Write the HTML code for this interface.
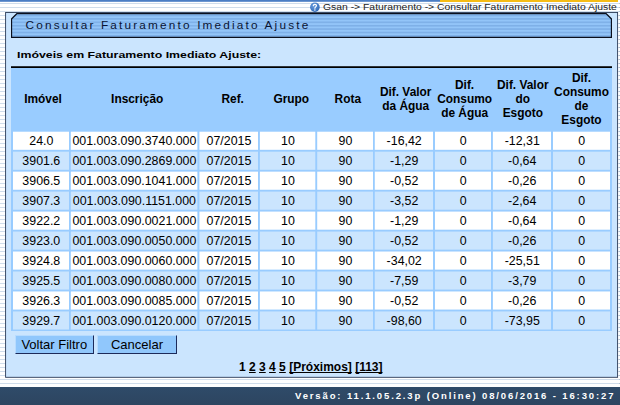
<!DOCTYPE html>
<html><head><meta charset="utf-8">
<style>
html,body{margin:0;padding:0;}
body{width:620px;height:405px;overflow:hidden;position:relative;font-family:"Liberation Sans",sans-serif;
background:repeating-linear-gradient(to bottom,#d0ddeb 0,#d0ddeb 0.4px,#ffffff 0.4px,#ffffff 3.4px,#d0ddeb 3.4px,#d0ddeb 4px);color:#000;}
.topbar{position:absolute;left:0;top:0;width:441px;height:2px;background:linear-gradient(to bottom,#4a7dc4 0,#4a7dc4 1.2px,#a9c2e4 2px);}
.crumbbg{position:absolute;left:322px;top:0;width:298px;height:12px;background:#fff;}
.crumb{position:absolute;left:323.3px;top:1.2px;height:12px;line-height:12px;font-size:9.2px;color:#222;white-space:nowrap;transform:scaleX(1.128);transform-origin:0 0;}
.qi{position:absolute;left:309px;top:1px;width:12px;height:12px;}
.hl{position:absolute;left:440px;top:0;width:178px;height:2px;background:linear-gradient(to bottom,#f5bc16 0,#f5bc16 1.7px,#f9d773 2px);}
.panel{position:absolute;left:0;top:0;width:620px;height:405px;}
.title{position:absolute;left:11px;top:13px;width:601px;height:25px;}
.ttext{position:absolute;left:25.5px;top:17.2px;font-size:11.8px;letter-spacing:2.17px;color:#0a1433;white-space:nowrap;line-height:16px;}
.sub{position:absolute;left:17px;top:49px;font-size:9.6px;font-weight:bold;color:#000;white-space:nowrap;line-height:12px;transform:scaleX(1.285);transform-origin:0 0;}
.bline{position:absolute;left:11px;top:66px;width:601px;height:2px;background:linear-gradient(to bottom,#30363c 0,#30363c 1px,#000 1px);}
.thead{position:absolute;left:11px;top:68px;width:601px;height:62px;background:#99ccff;}
.th{position:absolute;font-weight:bold;font-size:11.9px;line-height:13.9px;text-align:center;color:#000;}
.tbl{position:absolute;left:11px;top:130px;width:601px;height:201px;background:#99ccff;}
.c{position:absolute;height:18px;line-height:18px;font-size:12.4px;text-align:center;white-space:nowrap;}
.btn{position:absolute;top:335px;height:18.5px;box-sizing:border-box;background:#90c7fc;border-top:1px solid #b8dcff;border-left:1px solid #b8dcff;border-right:1.5px solid #1c2a5a;border-bottom:1.5px solid #1c2a5a;font-size:13px;line-height:17px;text-align:center;color:#000;}
.pag{position:absolute;left:239px;top:360.6px;text-decoration-skip-ink:none;font-size:12px;font-weight:bold;line-height:13px;white-space:nowrap;}
.pag u{margin:0;}
.footer{position:absolute;left:0;top:387px;width:620px;height:18px;background:linear-gradient(to bottom,#2f4b69,#2d4560);}
.ftext{position:absolute;right:4.7px;top:390px;color:#fff;font-weight:bold;font-size:9.5px;letter-spacing:1.87px;line-height:12px;white-space:nowrap;}
</style></head><body>
<div class="topbar"></div>
<div style="position:absolute;left:618.6px;top:2px;width:1.4px;height:385px;background:repeating-linear-gradient(to bottom,#b4c2d2 0,#b4c2d2 0.4px,#ffffff 0.4px,#ffffff 3.4px,#b4c2d2 3.4px,#b4c2d2 4px);background-position:0 -2px"></div>
<div class="hl"></div>
<svg class="qi" viewBox="0 0 12 12"><defs><radialGradient id="qg" cx="40%" cy="35%" r="70%"><stop offset="0" stop-color="#6b9fe0"/><stop offset="1" stop-color="#2f67b5"/></radialGradient></defs><circle cx="5.9" cy="6.2" r="4.8" fill="url(#qg)"/><path d="M4.3 4.6 Q4.4 3.3 5.9 3.3 Q7.5 3.3 7.5 4.6 Q7.5 5.5 6.6 5.9 Q5.9 6.3 5.9 7.2" fill="none" stroke="#fff" stroke-width="1.2" stroke-linecap="round"/><circle cx="5.9" cy="8.9" r="0.75" fill="#fff"/></svg>
<div class="crumb">Gsan -&gt; Faturamento -&gt; Consultar Faturamento Imediato Ajuste</div>
<svg class="panel" viewBox="0 0 620 405"><rect x="5.6" y="12.45" width="612" height="364.85" fill="#cbe5fe" stroke="#2b3a56" stroke-width="0.9"/></svg>
<svg class="title" viewBox="0 0 601 25" width="601" height="25">
<defs><pattern id="st" width="4" height="3.4" patternUnits="userSpaceOnUse"><rect width="4" height="3.4" fill="#93c5f8"/><rect y="1.9" width="4" height="1.2" fill="#76a8e2"/></pattern></defs>
<path d="M0.5 6 L6 0.5 L595 0.5 L600.5 6 L600.5 24.5 L0.5 24.5 Z" fill="url(#st)" stroke="#0a0f1c" stroke-width="1.3" stroke-linejoin="miter"/>
</svg>
<div class="ttext">Consultar Faturamento Imediato Ajuste</div>
<div class="sub">Imóveis em Faturamento Imediato Ajuste:</div>
<div class="bline"></div>
<div class="thead"></div>
<div id="heads">
<div class="th" style="left:3.0px;top:92.8px;width:80px">Imóvel</div>
<div class="th" style="left:97.2px;top:92.8px;width:80px">Inscrição</div>
<div class="th" style="left:192.7px;top:92.8px;width:80px">Ref.</div>
<div class="th" style="left:251.3px;top:92.8px;width:80px">Grupo</div>
<div class="th" style="left:307.8px;top:92.8px;width:80px">Rota</div>
<div class="th" style="left:365.7px;top:85.8px;width:80px">Dif. Valor<br>da Água</div>
<div class="th" style="left:424.6px;top:78.8px;width:80px">Dif.<br>Consumo<br>de Água</div>
<div class="th" style="left:482.8px;top:78.8px;width:80px">Dif. Valor<br>do<br>Esgoto</div>
<div class="th" style="left:541.5px;top:71.9px;width:80px">Dif.<br>Consumo<br>de<br>Esgoto</div>
</div><!--eh-->
<div class="tbl" id="tbl">
<svg style="position:absolute;left:0;top:0" width="601" height="202" viewBox="11 130 601 202">
<rect x="13" y="131.70" width="56.0" height="18.1" fill="#fff"/>
<rect x="70.8" y="131.70" width="126.6" height="18.1" fill="#fff"/>
<rect x="199.4" y="131.70" width="58.6" height="18.1" fill="#fff"/>
<rect x="259.9" y="131.70" width="55.4" height="18.1" fill="#fff"/>
<rect x="317.2" y="131.70" width="55.8" height="18.1" fill="#fff"/>
<rect x="374.8" y="131.70" width="58.2" height="18.1" fill="#fff"/>
<rect x="435" y="131.70" width="56.0" height="18.1" fill="#fff"/>
<rect x="492.9" y="131.70" width="58.1" height="18.1" fill="#fff"/>
<rect x="553" y="131.70" width="57.0" height="18.1" fill="#fff"/>
<rect x="13" y="151.67" width="56.0" height="18.1" fill="#cbe5fe"/>
<rect x="70.8" y="151.67" width="126.6" height="18.1" fill="#cbe5fe"/>
<rect x="199.4" y="151.67" width="58.6" height="18.1" fill="#cbe5fe"/>
<rect x="259.9" y="151.67" width="55.4" height="18.1" fill="#cbe5fe"/>
<rect x="317.2" y="151.67" width="55.8" height="18.1" fill="#cbe5fe"/>
<rect x="374.8" y="151.67" width="58.2" height="18.1" fill="#cbe5fe"/>
<rect x="435" y="151.67" width="56.0" height="18.1" fill="#cbe5fe"/>
<rect x="492.9" y="151.67" width="58.1" height="18.1" fill="#cbe5fe"/>
<rect x="553" y="151.67" width="57.0" height="18.1" fill="#cbe5fe"/>
<rect x="13" y="171.64" width="56.0" height="18.1" fill="#fff"/>
<rect x="70.8" y="171.64" width="126.6" height="18.1" fill="#fff"/>
<rect x="199.4" y="171.64" width="58.6" height="18.1" fill="#fff"/>
<rect x="259.9" y="171.64" width="55.4" height="18.1" fill="#fff"/>
<rect x="317.2" y="171.64" width="55.8" height="18.1" fill="#fff"/>
<rect x="374.8" y="171.64" width="58.2" height="18.1" fill="#fff"/>
<rect x="435" y="171.64" width="56.0" height="18.1" fill="#fff"/>
<rect x="492.9" y="171.64" width="58.1" height="18.1" fill="#fff"/>
<rect x="553" y="171.64" width="57.0" height="18.1" fill="#fff"/>
<rect x="13" y="191.61" width="56.0" height="18.1" fill="#cbe5fe"/>
<rect x="70.8" y="191.61" width="126.6" height="18.1" fill="#cbe5fe"/>
<rect x="199.4" y="191.61" width="58.6" height="18.1" fill="#cbe5fe"/>
<rect x="259.9" y="191.61" width="55.4" height="18.1" fill="#cbe5fe"/>
<rect x="317.2" y="191.61" width="55.8" height="18.1" fill="#cbe5fe"/>
<rect x="374.8" y="191.61" width="58.2" height="18.1" fill="#cbe5fe"/>
<rect x="435" y="191.61" width="56.0" height="18.1" fill="#cbe5fe"/>
<rect x="492.9" y="191.61" width="58.1" height="18.1" fill="#cbe5fe"/>
<rect x="553" y="191.61" width="57.0" height="18.1" fill="#cbe5fe"/>
<rect x="13" y="211.58" width="56.0" height="18.1" fill="#fff"/>
<rect x="70.8" y="211.58" width="126.6" height="18.1" fill="#fff"/>
<rect x="199.4" y="211.58" width="58.6" height="18.1" fill="#fff"/>
<rect x="259.9" y="211.58" width="55.4" height="18.1" fill="#fff"/>
<rect x="317.2" y="211.58" width="55.8" height="18.1" fill="#fff"/>
<rect x="374.8" y="211.58" width="58.2" height="18.1" fill="#fff"/>
<rect x="435" y="211.58" width="56.0" height="18.1" fill="#fff"/>
<rect x="492.9" y="211.58" width="58.1" height="18.1" fill="#fff"/>
<rect x="553" y="211.58" width="57.0" height="18.1" fill="#fff"/>
<rect x="13" y="231.55" width="56.0" height="18.1" fill="#cbe5fe"/>
<rect x="70.8" y="231.55" width="126.6" height="18.1" fill="#cbe5fe"/>
<rect x="199.4" y="231.55" width="58.6" height="18.1" fill="#cbe5fe"/>
<rect x="259.9" y="231.55" width="55.4" height="18.1" fill="#cbe5fe"/>
<rect x="317.2" y="231.55" width="55.8" height="18.1" fill="#cbe5fe"/>
<rect x="374.8" y="231.55" width="58.2" height="18.1" fill="#cbe5fe"/>
<rect x="435" y="231.55" width="56.0" height="18.1" fill="#cbe5fe"/>
<rect x="492.9" y="231.55" width="58.1" height="18.1" fill="#cbe5fe"/>
<rect x="553" y="231.55" width="57.0" height="18.1" fill="#cbe5fe"/>
<rect x="13" y="251.52" width="56.0" height="18.1" fill="#fff"/>
<rect x="70.8" y="251.52" width="126.6" height="18.1" fill="#fff"/>
<rect x="199.4" y="251.52" width="58.6" height="18.1" fill="#fff"/>
<rect x="259.9" y="251.52" width="55.4" height="18.1" fill="#fff"/>
<rect x="317.2" y="251.52" width="55.8" height="18.1" fill="#fff"/>
<rect x="374.8" y="251.52" width="58.2" height="18.1" fill="#fff"/>
<rect x="435" y="251.52" width="56.0" height="18.1" fill="#fff"/>
<rect x="492.9" y="251.52" width="58.1" height="18.1" fill="#fff"/>
<rect x="553" y="251.52" width="57.0" height="18.1" fill="#fff"/>
<rect x="13" y="271.49" width="56.0" height="18.1" fill="#cbe5fe"/>
<rect x="70.8" y="271.49" width="126.6" height="18.1" fill="#cbe5fe"/>
<rect x="199.4" y="271.49" width="58.6" height="18.1" fill="#cbe5fe"/>
<rect x="259.9" y="271.49" width="55.4" height="18.1" fill="#cbe5fe"/>
<rect x="317.2" y="271.49" width="55.8" height="18.1" fill="#cbe5fe"/>
<rect x="374.8" y="271.49" width="58.2" height="18.1" fill="#cbe5fe"/>
<rect x="435" y="271.49" width="56.0" height="18.1" fill="#cbe5fe"/>
<rect x="492.9" y="271.49" width="58.1" height="18.1" fill="#cbe5fe"/>
<rect x="553" y="271.49" width="57.0" height="18.1" fill="#cbe5fe"/>
<rect x="13" y="291.46" width="56.0" height="18.1" fill="#fff"/>
<rect x="70.8" y="291.46" width="126.6" height="18.1" fill="#fff"/>
<rect x="199.4" y="291.46" width="58.6" height="18.1" fill="#fff"/>
<rect x="259.9" y="291.46" width="55.4" height="18.1" fill="#fff"/>
<rect x="317.2" y="291.46" width="55.8" height="18.1" fill="#fff"/>
<rect x="374.8" y="291.46" width="58.2" height="18.1" fill="#fff"/>
<rect x="435" y="291.46" width="56.0" height="18.1" fill="#fff"/>
<rect x="492.9" y="291.46" width="58.1" height="18.1" fill="#fff"/>
<rect x="553" y="291.46" width="57.0" height="18.1" fill="#fff"/>
<rect x="13" y="311.43" width="56.0" height="18.1" fill="#cbe5fe"/>
<rect x="70.8" y="311.43" width="126.6" height="18.1" fill="#cbe5fe"/>
<rect x="199.4" y="311.43" width="58.6" height="18.1" fill="#cbe5fe"/>
<rect x="259.9" y="311.43" width="55.4" height="18.1" fill="#cbe5fe"/>
<rect x="317.2" y="311.43" width="55.8" height="18.1" fill="#cbe5fe"/>
<rect x="374.8" y="311.43" width="58.2" height="18.1" fill="#cbe5fe"/>
<rect x="435" y="311.43" width="56.0" height="18.1" fill="#cbe5fe"/>
<rect x="492.9" y="311.43" width="58.1" height="18.1" fill="#cbe5fe"/>
<rect x="553" y="311.43" width="57.0" height="18.1" fill="#cbe5fe"/>
</svg>
<div class="c" style="left:2.3px;top:2.10px;width:56.0px">24.0</div>
<div class="c" style="left:60.1px;top:2.10px;width:126.6px">001.003.090.3740.000</div>
<div class="c" style="left:188.7px;top:2.10px;width:58.6px">07/2015</div>
<div class="c" style="left:249.2px;top:2.10px;width:55.4px">10</div>
<div class="c" style="left:306.5px;top:2.10px;width:55.8px">90</div>
<div class="c" style="left:364.1px;top:2.10px;width:58.2px">-16,42</div>
<div class="c" style="left:424.3px;top:2.10px;width:56.0px">0</div>
<div class="c" style="left:482.2px;top:2.10px;width:58.1px">-12,31</div>
<div class="c" style="left:542.3px;top:2.10px;width:57.0px">0</div>
<div class="c" style="left:2.3px;top:22.07px;width:56.0px">3901.6</div>
<div class="c" style="left:60.1px;top:22.07px;width:126.6px">001.003.090.2869.000</div>
<div class="c" style="left:188.7px;top:22.07px;width:58.6px">07/2015</div>
<div class="c" style="left:249.2px;top:22.07px;width:55.4px">10</div>
<div class="c" style="left:306.5px;top:22.07px;width:55.8px">90</div>
<div class="c" style="left:364.1px;top:22.07px;width:58.2px">-1,29</div>
<div class="c" style="left:424.3px;top:22.07px;width:56.0px">0</div>
<div class="c" style="left:482.2px;top:22.07px;width:58.1px">-0,64</div>
<div class="c" style="left:542.3px;top:22.07px;width:57.0px">0</div>
<div class="c" style="left:2.3px;top:42.04px;width:56.0px">3906.5</div>
<div class="c" style="left:60.1px;top:42.04px;width:126.6px">001.003.090.1041.000</div>
<div class="c" style="left:188.7px;top:42.04px;width:58.6px">07/2015</div>
<div class="c" style="left:249.2px;top:42.04px;width:55.4px">10</div>
<div class="c" style="left:306.5px;top:42.04px;width:55.8px">90</div>
<div class="c" style="left:364.1px;top:42.04px;width:58.2px">-0,52</div>
<div class="c" style="left:424.3px;top:42.04px;width:56.0px">0</div>
<div class="c" style="left:482.2px;top:42.04px;width:58.1px">-0,26</div>
<div class="c" style="left:542.3px;top:42.04px;width:57.0px">0</div>
<div class="c" style="left:2.3px;top:62.01px;width:56.0px">3907.3</div>
<div class="c" style="left:60.1px;top:62.01px;width:126.6px">001.003.090.1151.000</div>
<div class="c" style="left:188.7px;top:62.01px;width:58.6px">07/2015</div>
<div class="c" style="left:249.2px;top:62.01px;width:55.4px">10</div>
<div class="c" style="left:306.5px;top:62.01px;width:55.8px">90</div>
<div class="c" style="left:364.1px;top:62.01px;width:58.2px">-3,52</div>
<div class="c" style="left:424.3px;top:62.01px;width:56.0px">0</div>
<div class="c" style="left:482.2px;top:62.01px;width:58.1px">-2,64</div>
<div class="c" style="left:542.3px;top:62.01px;width:57.0px">0</div>
<div class="c" style="left:2.3px;top:81.98px;width:56.0px">3922.2</div>
<div class="c" style="left:60.1px;top:81.98px;width:126.6px">001.003.090.0021.000</div>
<div class="c" style="left:188.7px;top:81.98px;width:58.6px">07/2015</div>
<div class="c" style="left:249.2px;top:81.98px;width:55.4px">10</div>
<div class="c" style="left:306.5px;top:81.98px;width:55.8px">90</div>
<div class="c" style="left:364.1px;top:81.98px;width:58.2px">-1,29</div>
<div class="c" style="left:424.3px;top:81.98px;width:56.0px">0</div>
<div class="c" style="left:482.2px;top:81.98px;width:58.1px">-0,64</div>
<div class="c" style="left:542.3px;top:81.98px;width:57.0px">0</div>
<div class="c" style="left:2.3px;top:101.95px;width:56.0px">3923.0</div>
<div class="c" style="left:60.1px;top:101.95px;width:126.6px">001.003.090.0050.000</div>
<div class="c" style="left:188.7px;top:101.95px;width:58.6px">07/2015</div>
<div class="c" style="left:249.2px;top:101.95px;width:55.4px">10</div>
<div class="c" style="left:306.5px;top:101.95px;width:55.8px">90</div>
<div class="c" style="left:364.1px;top:101.95px;width:58.2px">-0,52</div>
<div class="c" style="left:424.3px;top:101.95px;width:56.0px">0</div>
<div class="c" style="left:482.2px;top:101.95px;width:58.1px">-0,26</div>
<div class="c" style="left:542.3px;top:101.95px;width:57.0px">0</div>
<div class="c" style="left:2.3px;top:121.92px;width:56.0px">3924.8</div>
<div class="c" style="left:60.1px;top:121.92px;width:126.6px">001.003.090.0060.000</div>
<div class="c" style="left:188.7px;top:121.92px;width:58.6px">07/2015</div>
<div class="c" style="left:249.2px;top:121.92px;width:55.4px">10</div>
<div class="c" style="left:306.5px;top:121.92px;width:55.8px">90</div>
<div class="c" style="left:364.1px;top:121.92px;width:58.2px">-34,02</div>
<div class="c" style="left:424.3px;top:121.92px;width:56.0px">0</div>
<div class="c" style="left:482.2px;top:121.92px;width:58.1px">-25,51</div>
<div class="c" style="left:542.3px;top:121.92px;width:57.0px">0</div>
<div class="c" style="left:2.3px;top:141.89px;width:56.0px">3925.5</div>
<div class="c" style="left:60.1px;top:141.89px;width:126.6px">001.003.090.0080.000</div>
<div class="c" style="left:188.7px;top:141.89px;width:58.6px">07/2015</div>
<div class="c" style="left:249.2px;top:141.89px;width:55.4px">10</div>
<div class="c" style="left:306.5px;top:141.89px;width:55.8px">90</div>
<div class="c" style="left:364.1px;top:141.89px;width:58.2px">-7,59</div>
<div class="c" style="left:424.3px;top:141.89px;width:56.0px">0</div>
<div class="c" style="left:482.2px;top:141.89px;width:58.1px">-3,79</div>
<div class="c" style="left:542.3px;top:141.89px;width:57.0px">0</div>
<div class="c" style="left:2.3px;top:161.86px;width:56.0px">3926.3</div>
<div class="c" style="left:60.1px;top:161.86px;width:126.6px">001.003.090.0085.000</div>
<div class="c" style="left:188.7px;top:161.86px;width:58.6px">07/2015</div>
<div class="c" style="left:249.2px;top:161.86px;width:55.4px">10</div>
<div class="c" style="left:306.5px;top:161.86px;width:55.8px">90</div>
<div class="c" style="left:364.1px;top:161.86px;width:58.2px">-0,52</div>
<div class="c" style="left:424.3px;top:161.86px;width:56.0px">0</div>
<div class="c" style="left:482.2px;top:161.86px;width:58.1px">-0,26</div>
<div class="c" style="left:542.3px;top:161.86px;width:57.0px">0</div>
<div class="c" style="left:2.3px;top:181.83px;width:56.0px">3929.7</div>
<div class="c" style="left:60.1px;top:181.83px;width:126.6px">001.003.090.0120.000</div>
<div class="c" style="left:188.7px;top:181.83px;width:58.6px">07/2015</div>
<div class="c" style="left:249.2px;top:181.83px;width:55.4px">10</div>
<div class="c" style="left:306.5px;top:181.83px;width:55.8px">90</div>
<div class="c" style="left:364.1px;top:181.83px;width:58.2px">-98,60</div>
<div class="c" style="left:424.3px;top:181.83px;width:56.0px">0</div>
<div class="c" style="left:482.2px;top:181.83px;width:58.1px">-73,95</div>
<div class="c" style="left:542.3px;top:181.83px;width:57.0px">0</div>
</div><!--et-->
<div class="btn" style="left:14.5px;width:79.5px;">Voltar Filtro</div>
<div class="btn" style="left:97px;width:80px;">Cancelar</div>
<div class="pag">1 <u>2</u> <u>3</u> <u>4</u> <u>5</u> <u>[Próximos]</u> <u>[113]</u></div>
<div class="footer"></div>
<div class="ftext">Versão: 11.1.05.2.3p (Online) 08/06/2016 - 16:30:27</div>
</body></html>
